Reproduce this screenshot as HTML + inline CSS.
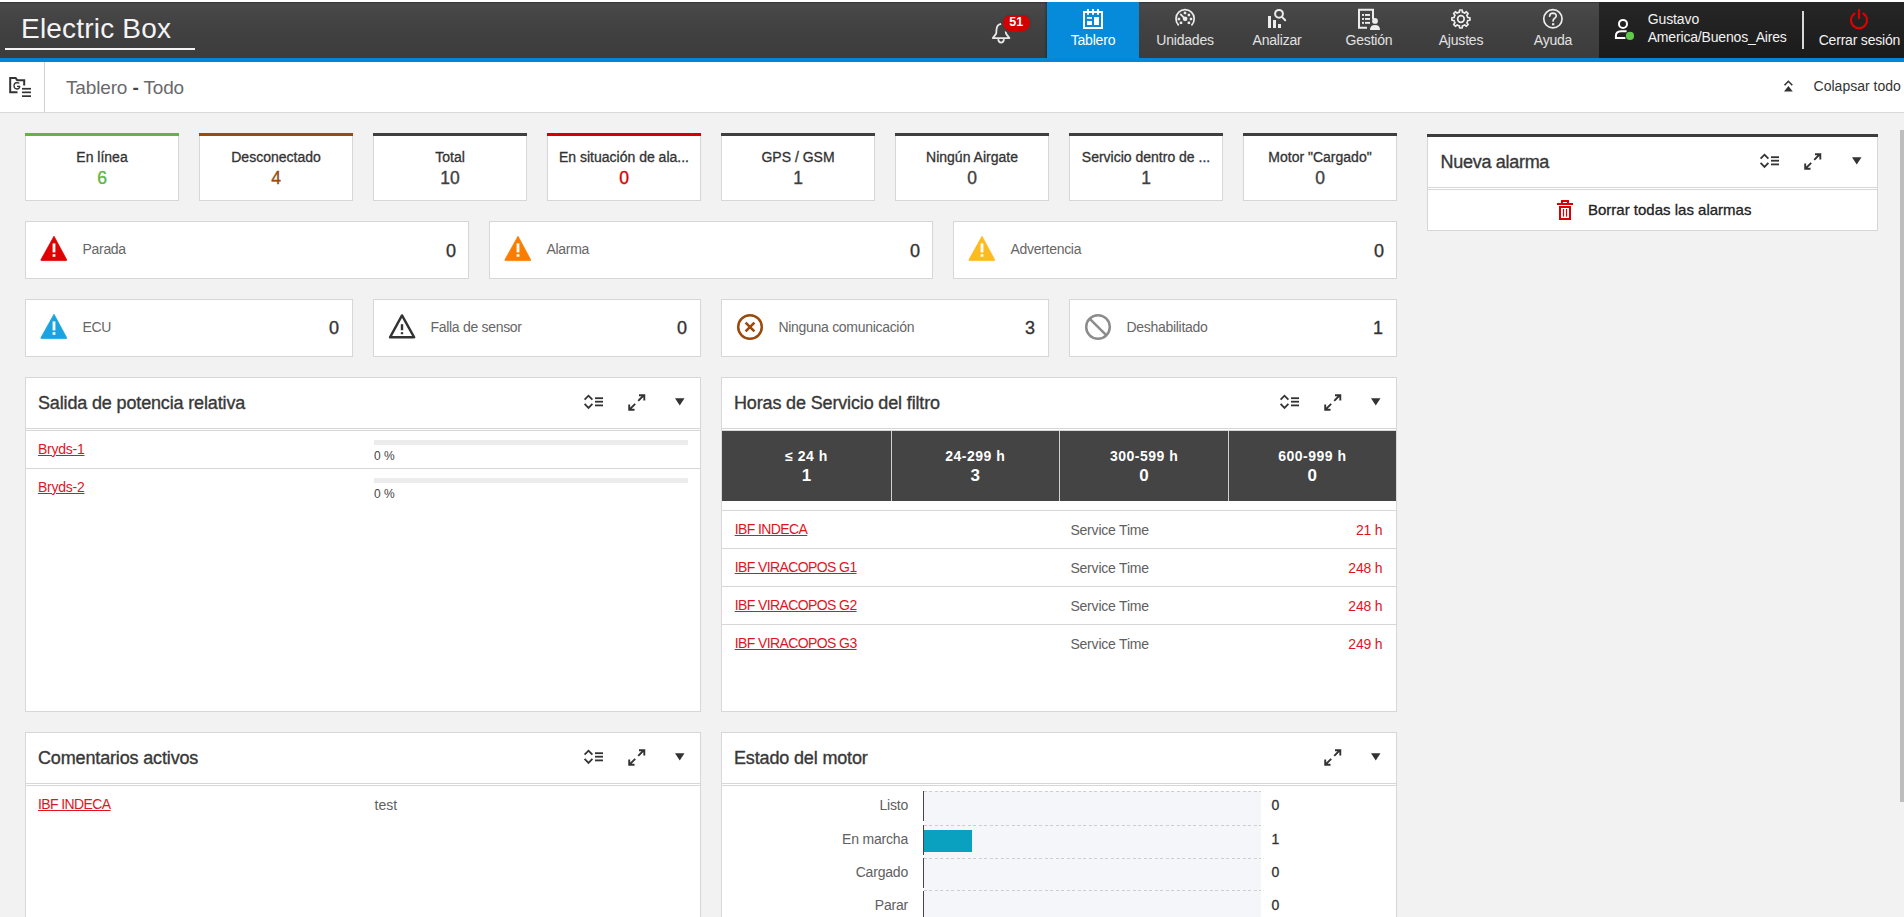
<!DOCTYPE html><html><head><meta charset="utf-8"><style>
html,body{margin:0;padding:0;}
body{width:1904px;height:917px;overflow:hidden;position:relative;background:#f2f2f2;font-family:"Liberation Sans",sans-serif;}
.t{position:absolute;white-space:nowrap;font-family:"Liberation Sans",sans-serif;}
.r{position:absolute;box-sizing:border-box;}
svg.r{overflow:visible;}
a{color:inherit;}
</style></head><body>
<div class="r" style="left:0px;top:0px;width:1904px;height:2px;background:#ffffff;"></div>
<div class="r" style="left:0px;top:2px;width:1904px;height:56px;background:linear-gradient(#353535 0px,#4a4a4a 2px,#474747 7px,#424242 22px,#3c3c3c 56px);"></div>
<div class="r" style="left:0px;top:58px;width:1904px;height:4px;background:#0287d8;"></div>
<div class="t" style="top:15.20px;font-size:28px;line-height:28px;color:#f4f4f4;font-weight:400;left:21.00px;letter-spacing:0.2px;">Electric Box</div>
<div class="r" style="left:5px;top:47.8px;width:190px;height:2.5px;background:#f4f4f4;"></div>
<svg class="r" style="left:988px;top:18px;" width="28" height="28" viewBox="0 0 28 28"><path d="M13 5.800000000000001 Q8.799999999999955 6.5 8.5 11.5 L8.200000000000045 15.600000000000001 L4.7999999999999545 20.1 L21.399999999999977 20.1 L18 15.600000000000001 L17.600000000000023 11.5 Q17.299999999999955 6.5 13 5.800000000000001 Z" fill="none" stroke="#e8e8e8" stroke-width="1.8" stroke-linejoin="round"/><path d="M10.200000000000045 21.200000000000003 Q10.600000000000023 24.6 13.100000000000023 24.6 Q15.600000000000023 24.6 16 21.200000000000003" fill="none" stroke="#e8e8e8" stroke-width="1.8"/></svg>
<div class="r" style="left:1001.2px;top:13.6px;width:30.7px;height:19px;background:#404040;border-radius:9.5px;"></div>
<div class="r" style="left:1002.7px;top:15.1px;width:27.7px;height:16px;background:#d40000;border-radius:8px;"></div>
<div class="t" style="top:16.42px;font-size:12.5px;line-height:12.5px;color:#fff;font-weight:700;left:616.20px;width:800px;text-align:center;">51</div>
<div class="r" style="left:1044px;top:2px;width:3px;height:56px;background:linear-gradient(90deg,rgba(0,0,0,0),rgba(0,0,0,0.25));"></div>
<div class="r" style="left:1047px;top:2px;width:92px;height:56px;background:#068ada;"></div>
<div class="t" style="top:33.15px;font-size:14px;line-height:14px;color:#ffffff;font-weight:400;left:693.00px;width:800px;text-align:center;letter-spacing:-0.2px;">Tablero</div>
<div class="t" style="top:33.15px;font-size:14px;line-height:14px;color:#e2e2e2;font-weight:400;left:785.00px;width:800px;text-align:center;letter-spacing:-0.2px;">Unidades</div>
<div class="t" style="top:33.15px;font-size:14px;line-height:14px;color:#e2e2e2;font-weight:400;left:877.00px;width:800px;text-align:center;letter-spacing:-0.2px;">Analizar</div>
<div class="t" style="top:33.15px;font-size:14px;line-height:14px;color:#e2e2e2;font-weight:400;left:969.00px;width:800px;text-align:center;letter-spacing:-0.2px;">Gestión</div>
<div class="t" style="top:33.15px;font-size:14px;line-height:14px;color:#e2e2e2;font-weight:400;left:1061.00px;width:800px;text-align:center;letter-spacing:-0.2px;">Ajustes</div>
<div class="t" style="top:33.15px;font-size:14px;line-height:14px;color:#e2e2e2;font-weight:400;left:1153.00px;width:800px;text-align:center;letter-spacing:-0.2px;">Ayuda</div>
<svg class="r" style="left:1080px;top:6px;" width="26" height="26" viewBox="0 0 26 26"><rect x="4" y="6" width="18" height="16" fill="none" stroke="#fff" stroke-width="2"/><rect x="7" y="3" width="2" height="5.7" fill="#fff"/><rect x="12" y="3" width="2" height="5.7" fill="#fff"/><rect x="17" y="3" width="2" height="5.7" fill="#fff"/><rect x="7" y="11" width="5" height="1.8" fill="#fff"/><rect x="7" y="15" width="5" height="4" fill="#fff"/><rect x="14" y="11" width="5" height="8" fill="#fff"/></svg>
<svg class="r" style="left:1172px;top:6px;" width="26" height="26" viewBox="0 0 26 26"><path d="M6.31 18.85 A9.1 9.1 0 1 1 19.89 18.85" fill="none" stroke="#ececec" stroke-width="1.7" stroke-linecap="round"/><rect x="11.75" y="5.70" width="2.5" height="2.5" fill="#ececec"/><rect x="15.65" y="7.75" width="2.5" height="2.5" fill="#ececec"/><rect x="5.65" y="11.75" width="2.5" height="2.5" fill="#ececec"/><rect x="17.75" y="11.75" width="2.5" height="2.5" fill="#ececec"/><rect x="7.75" y="15.55" width="2.5" height="2.5" fill="#ececec"/><rect x="15.65" y="15.55" width="2.5" height="2.5" fill="#ececec"/><line x1="8.70" y1="8.40" x2="13.10" y2="12.80" stroke="#ececec" stroke-width="1.8" stroke-linecap="round"/><circle cx="13.10" cy="12.80" r="2.4" fill="#ececec"/></svg>
<svg class="r" style="left:1264px;top:6px;" width="26" height="26" viewBox="0 0 26 26"><rect x="4" y="10" width="3" height="12" fill="#ececec"/><rect x="9" y="14" width="3" height="8" fill="#ececec"/><rect x="14" y="18" width="3" height="4" fill="#ececec"/><circle cx="15" cy="7.800000000000001" r="3.9" fill="none" stroke="#ececec" stroke-width="2"/><line x1="18" y1="10.899999999999999" x2="21.200000000000045" y2="14.2" stroke="#ececec" stroke-width="2" stroke-linecap="round"/></svg>
<svg class="r" style="left:1354px;top:6px;" width="30" height="28" viewBox="0 0 30 28"><path d="M19 13 L19 3.8000000000000007 L5 3.8000000000000007 L5 21.8 L13 21.8" fill="none" stroke="#ececec" stroke-width="2"/><rect x="8" y="8" width="2" height="1.9" fill="#ececec"/><rect x="11" y="8" width="5" height="1.9" fill="#ececec"/><rect x="8" y="12" width="2" height="1.9" fill="#ececec"/><rect x="11" y="12" width="5" height="1.9" fill="#ececec"/><rect x="8" y="15.899999999999999" width="2" height="1.9" fill="#ececec"/><rect x="11" y="15.899999999999999" width="5" height="1.9" fill="#ececec"/><circle cx="21" cy="14.899999999999999" r="2.9" fill="#ececec"/><path d="M16 24 Q16 19 21 19 Q26 19 26 24 Z" fill="#ececec"/></svg>
<svg class="r" style="left:1448px;top:6px;" width="26" height="26" viewBox="0 0 26 26"><path d="M11.37 6.17 L11.63 3.99 L14.17 3.99 L14.43 6.17 L15.19 6.39 L15.58 6.53 L15.95 6.70 L16.65 7.09 L18.37 5.73 L20.17 7.53 L18.81 9.25 L19.20 9.95 L19.37 10.32 L19.51 10.71 L19.73 11.47 L21.91 11.73 L21.91 14.27 L19.73 14.53 L19.51 15.29 L19.37 15.68 L19.20 16.05 L18.81 16.75 L20.17 18.47 L18.37 20.27 L16.65 18.91 L15.95 19.30 L15.58 19.47 L15.19 19.61 L14.43 19.83 L14.17 22.01 L11.63 22.01 L11.37 19.83 L10.61 19.61 L10.22 19.47 L9.85 19.30 L9.15 18.91 L7.43 20.27 L5.63 18.47 L6.99 16.75 L6.60 16.05 L6.43 15.68 L6.29 15.29 L6.07 14.53 L3.89 14.27 L3.89 11.73 L6.07 11.47 L6.29 10.71 L6.43 10.32 L6.60 9.95 L6.99 9.25 L5.63 7.53 L7.43 5.73 L9.15 7.09 L9.85 6.70 L10.22 6.53 L10.61 6.39 Z" fill="none" stroke="#ececec" stroke-width="1.7" stroke-linejoin="round"/><circle cx="12.90" cy="13.00" r="3.3" fill="none" stroke="#ececec" stroke-width="1.7"/></svg>
<svg class="r" style="left:1540px;top:6px;" width="26" height="26" viewBox="0 0 26 26"><circle cx="12.90" cy="12.80" r="9.15" fill="none" stroke="#ececec" stroke-width="1.7"/><path d="M9.60 10.20 Q9.80 7.20 13.00 7.20 Q16.30 7.30 16.20 10.00 Q16.00 11.60 14.40 12.50 Q13.10 13.30 13.10 15.00" fill="none" stroke="#ececec" stroke-width="1.7" stroke-linecap="round"/><rect x="12.00" y="17.20" width="2.3" height="2.1" fill="#ececec"/></svg>
<div class="r" style="left:1599px;top:2px;width:305px;height:56px;background:linear-gradient(#262626,#1b1b1b);"></div>
<svg class="r" style="left:1608px;top:14px;" width="30" height="30" viewBox="0 0 30 30"><circle cx="15" cy="9.899999999999999" r="4" fill="none" stroke="#fff" stroke-width="2"/><path d="M18.59999999999991 17.3 L13 17.3 Q7.900000000000091 17.6 7.900000000000091 21.799999999999997 L7.900000000000091 23.9 L17.5 23.9" fill="none" stroke="#fff" stroke-width="2"/><circle cx="22" cy="21.9" r="4.8" fill="#1f1f1f"/><circle cx="22" cy="21.9" r="4.1" fill="#5ec94a"/></svg>
<div class="t" style="top:12.15px;font-size:14px;line-height:14px;color:#f2f2f2;font-weight:400;left:1647.70px;letter-spacing:-0.1px;">Gustavo</div>
<div class="t" style="top:30.15px;font-size:14px;line-height:14px;color:#f2f2f2;font-weight:400;left:1647.70px;letter-spacing:-0.17px;">America/Buenos_Aires</div>
<div class="r" style="left:1802px;top:10.5px;width:2px;height:38px;background:#d8d8d8;"></div>
<svg class="r" style="left:1846px;top:7px;" width="26" height="26" viewBox="0 0 26 26"><path d="M8.61 6.61 A8 8 0 1 0 17.39 6.61" fill="none" stroke="#e00000" stroke-width="2.1" stroke-linecap="round"/><line x1="13" y1="2.8000000000000007" x2="13" y2="11.2" stroke="#e00000" stroke-width="2.1" stroke-linecap="round"/></svg>
<div class="t" style="top:33.15px;font-size:14px;line-height:14px;color:#f2f2f2;font-weight:400;left:1459.40px;width:800px;text-align:center;letter-spacing:-0.2px;">Cerrar sesión</div>
<div class="r" style="left:0px;top:62px;width:1904px;height:50px;background:#fff;"></div>
<div class="r" style="left:0px;top:112px;width:1904px;height:1px;background:#d9d9d9;"></div>
<div class="r" style="left:44px;top:62px;width:1px;height:50px;background:#d0d0d0;"></div>
<svg class="r" style="left:6px;top:72px;" width="30" height="30" viewBox="0 0 30 30"><path d="M11.5 20.200000000000003 L4.199999999999999 20.200000000000003 L4.199999999999999 6 L9.6 6 L11.2 8.200000000000003 L18.2 8.200000000000003 L18.2 13.5" fill="none" stroke="#333" stroke-width="2" stroke-linejoin="miter"/><path d="M13.3 11.400000000000006 Q12.5 10.599999999999994 10.899999999999999 10.599999999999994 Q8 10.799999999999997 8 13.799999999999997 Q8.1 17 10.899999999999999 17 Q13.7 17 13.7 14.299999999999997 L11 14.299999999999997" fill="none" stroke="#333" stroke-width="1.3"/><rect x="16" y="15.900000000000006" width="9" height="1.7" fill="#333"/><rect x="16" y="19.5" width="9" height="1.7" fill="#333"/><rect x="16" y="23.299999999999997" width="9" height="1.7" fill="#333"/></svg>
<div class="t" style="top:77.72px;font-size:19px;line-height:19px;color:#6a6a6a;font-weight:400;left:66.00px;letter-spacing:-0.15px;">Tablero <b style="color:#444">-</b> Todo</div>
<svg class="r" style="left:1780px;top:76px;" width="18" height="20" viewBox="0 0 18 20"><path d="M4.5 9.200000000000003 L8.400000000000091 5.299999999999997 L12.299999999999955 9.200000000000003" fill="none" stroke="#333" stroke-width="1.6"/><path d="M8.400000000000091 10 L12.799999999999955 15.599999999999994 L4 15.599999999999994 Z" fill="#333"/></svg>
<div class="t" style="top:79.15px;font-size:14px;line-height:14px;color:#333;font-weight:400;left:1813.60px;">Colapsar todo</div>
<div class="r" style="left:25px;top:133px;width:154px;height:68px;background:#fff;border:1px solid #d7d7d7;border-top:none;"></div>
<div class="r" style="left:25px;top:133px;width:154px;height:3px;background:#62b446;"></div>
<div class="t" style="top:150.15px;font-size:14px;line-height:14px;color:#333;font-weight:400;left:-298.00px;width:800px;text-align:center;letter-spacing:0px;-webkit-text-stroke:0.3px #333;">En línea</div>
<div class="t" style="top:169.59px;font-size:17.5px;line-height:17.5px;color:#62b446;font-weight:400;left:-298.00px;width:800px;text-align:center;-webkit-text-stroke:0.35px #62b446;">6</div>
<div class="r" style="left:199px;top:133px;width:154px;height:68px;background:#fff;border:1px solid #d7d7d7;border-top:none;"></div>
<div class="r" style="left:199px;top:133px;width:154px;height:3px;background:#9a4a0c;"></div>
<div class="t" style="top:150.15px;font-size:14px;line-height:14px;color:#333;font-weight:400;left:-124.00px;width:800px;text-align:center;letter-spacing:0px;-webkit-text-stroke:0.3px #333;">Desconectado</div>
<div class="t" style="top:169.59px;font-size:17.5px;line-height:17.5px;color:#9a4a0c;font-weight:400;left:-124.00px;width:800px;text-align:center;-webkit-text-stroke:0.35px #9a4a0c;">4</div>
<div class="r" style="left:373px;top:133px;width:154px;height:68px;background:#fff;border:1px solid #d7d7d7;border-top:none;"></div>
<div class="r" style="left:373px;top:133px;width:154px;height:3px;background:#3f3f3f;"></div>
<div class="t" style="top:150.15px;font-size:14px;line-height:14px;color:#333;font-weight:400;left:50.00px;width:800px;text-align:center;letter-spacing:0px;-webkit-text-stroke:0.3px #333;">Total</div>
<div class="t" style="top:169.59px;font-size:17.5px;line-height:17.5px;color:#3f3f3f;font-weight:400;left:50.00px;width:800px;text-align:center;-webkit-text-stroke:0.35px #3f3f3f;">10</div>
<div class="r" style="left:547px;top:133px;width:154px;height:68px;background:#fff;border:1px solid #d7d7d7;border-top:none;"></div>
<div class="r" style="left:547px;top:133px;width:154px;height:3px;background:#d40000;"></div>
<div class="t" style="top:150.15px;font-size:14px;line-height:14px;color:#333;font-weight:400;left:224.00px;width:800px;text-align:center;letter-spacing:0px;-webkit-text-stroke:0.3px #333;">En situación de ala...</div>
<div class="t" style="top:169.59px;font-size:17.5px;line-height:17.5px;color:#d40000;font-weight:400;left:224.00px;width:800px;text-align:center;-webkit-text-stroke:0.35px #d40000;">0</div>
<div class="r" style="left:721px;top:133px;width:154px;height:68px;background:#fff;border:1px solid #d7d7d7;border-top:none;"></div>
<div class="r" style="left:721px;top:133px;width:154px;height:3px;background:#3f3f3f;"></div>
<div class="t" style="top:150.15px;font-size:14px;line-height:14px;color:#333;font-weight:400;left:398.00px;width:800px;text-align:center;letter-spacing:0px;-webkit-text-stroke:0.3px #333;">GPS / GSM</div>
<div class="t" style="top:169.59px;font-size:17.5px;line-height:17.5px;color:#3f3f3f;font-weight:400;left:398.00px;width:800px;text-align:center;-webkit-text-stroke:0.35px #3f3f3f;">1</div>
<div class="r" style="left:895px;top:133px;width:154px;height:68px;background:#fff;border:1px solid #d7d7d7;border-top:none;"></div>
<div class="r" style="left:895px;top:133px;width:154px;height:3px;background:#3f3f3f;"></div>
<div class="t" style="top:150.15px;font-size:14px;line-height:14px;color:#333;font-weight:400;left:572.00px;width:800px;text-align:center;letter-spacing:0px;-webkit-text-stroke:0.3px #333;">Ningún Airgate</div>
<div class="t" style="top:169.59px;font-size:17.5px;line-height:17.5px;color:#3f3f3f;font-weight:400;left:572.00px;width:800px;text-align:center;-webkit-text-stroke:0.35px #3f3f3f;">0</div>
<div class="r" style="left:1069px;top:133px;width:154px;height:68px;background:#fff;border:1px solid #d7d7d7;border-top:none;"></div>
<div class="r" style="left:1069px;top:133px;width:154px;height:3px;background:#3f3f3f;"></div>
<div class="t" style="top:150.15px;font-size:14px;line-height:14px;color:#333;font-weight:400;left:746.00px;width:800px;text-align:center;letter-spacing:0px;-webkit-text-stroke:0.3px #333;">Servicio dentro de ...</div>
<div class="t" style="top:169.59px;font-size:17.5px;line-height:17.5px;color:#3f3f3f;font-weight:400;left:746.00px;width:800px;text-align:center;-webkit-text-stroke:0.35px #3f3f3f;">1</div>
<div class="r" style="left:1243px;top:133px;width:154px;height:68px;background:#fff;border:1px solid #d7d7d7;border-top:none;"></div>
<div class="r" style="left:1243px;top:133px;width:154px;height:3px;background:#3f3f3f;"></div>
<div class="t" style="top:150.15px;font-size:14px;line-height:14px;color:#333;font-weight:400;left:920.00px;width:800px;text-align:center;letter-spacing:0px;-webkit-text-stroke:0.3px #333;">Motor "Cargado"</div>
<div class="t" style="top:169.59px;font-size:17.5px;line-height:17.5px;color:#3f3f3f;font-weight:400;left:920.00px;width:800px;text-align:center;-webkit-text-stroke:0.35px #3f3f3f;">0</div>
<div class="r" style="left:25px;top:221px;width:444px;height:58px;background:#fff;border:1px solid #d7d7d7;"></div>
<svg class="r" style="left:40px;top:235px" width="28" height="27" viewBox="0 0 28 27"><path d="M14 1.2 L26.6 24.6 Q27 25.6 26 25.6 L1.6 25.6 Q0.6 25.6 1 24.6 Z" fill="#e00000" stroke="#e00000" stroke-width="0.8" stroke-linejoin="round"/><rect x="12.6" y="8.4" width="2.8" height="9" fill="#fff"/><rect x="12.6" y="19.2" width="2.8" height="2.6" fill="#fff"/></svg>
<div class="t" style="top:242.15px;font-size:14px;line-height:14px;color:#666;font-weight:400;left:82.50px;letter-spacing:-0.3px;">Parada</div>
<div class="t" style="top:241.66px;font-size:18px;line-height:18px;color:#333;font-weight:400;left:-344.00px;width:800px;text-align:right;-webkit-text-stroke:0.35px #333;">0</div>
<div class="r" style="left:489px;top:221px;width:444px;height:58px;background:#fff;border:1px solid #d7d7d7;"></div>
<svg class="r" style="left:504px;top:235px" width="28" height="27" viewBox="0 0 28 27"><path d="M14 1.2 L26.6 24.6 Q27 25.6 26 25.6 L1.6 25.6 Q0.6 25.6 1 24.6 Z" fill="#fa7d00" stroke="#fa7d00" stroke-width="0.8" stroke-linejoin="round"/><rect x="12.6" y="8.4" width="2.8" height="9" fill="#fff"/><rect x="12.6" y="19.2" width="2.8" height="2.6" fill="#fff"/></svg>
<div class="t" style="top:242.15px;font-size:14px;line-height:14px;color:#666;font-weight:400;left:546.50px;letter-spacing:-0.3px;">Alarma</div>
<div class="t" style="top:241.66px;font-size:18px;line-height:18px;color:#333;font-weight:400;left:120.00px;width:800px;text-align:right;-webkit-text-stroke:0.35px #333;">0</div>
<div class="r" style="left:953px;top:221px;width:444px;height:58px;background:#fff;border:1px solid #d7d7d7;"></div>
<svg class="r" style="left:968px;top:235px" width="28" height="27" viewBox="0 0 28 27"><path d="M14 1.2 L26.6 24.6 Q27 25.6 26 25.6 L1.6 25.6 Q0.6 25.6 1 24.6 Z" fill="#fdbb1f" stroke="#fdbb1f" stroke-width="0.8" stroke-linejoin="round"/><rect x="12.6" y="8.4" width="2.8" height="9" fill="#fff"/><rect x="12.6" y="19.2" width="2.8" height="2.6" fill="#fff"/></svg>
<div class="t" style="top:242.15px;font-size:14px;line-height:14px;color:#666;font-weight:400;left:1010.50px;letter-spacing:-0.3px;">Advertencia</div>
<div class="t" style="top:241.66px;font-size:18px;line-height:18px;color:#333;font-weight:400;left:584.00px;width:800px;text-align:right;-webkit-text-stroke:0.35px #333;">0</div>
<div class="r" style="left:25px;top:299px;width:328px;height:58px;background:#fff;border:1px solid #d7d7d7;"></div>
<svg class="r" style="left:40px;top:313px" width="28" height="27" viewBox="0 0 28 27"><path d="M14 1.2 L26.6 24.6 Q27 25.6 26 25.6 L1.6 25.6 Q0.6 25.6 1 24.6 Z" fill="#1aa3e0" stroke="#1aa3e0" stroke-width="0.8" stroke-linejoin="round"/><rect x="12.6" y="8.4" width="2.8" height="9" fill="#fff"/><rect x="12.6" y="19.2" width="2.8" height="2.6" fill="#fff"/></svg>
<div class="t" style="top:320.45px;font-size:14px;line-height:14px;color:#666;font-weight:400;left:82.50px;letter-spacing:-0.3px;">ECU</div>
<div class="t" style="top:319.26px;font-size:18px;line-height:18px;color:#333;font-weight:400;left:-461.00px;width:800px;text-align:right;-webkit-text-stroke:0.35px #333;">0</div>
<div class="r" style="left:373px;top:299px;width:328px;height:58px;background:#fff;border:1px solid #d7d7d7;"></div>
<svg class="r" style="left:389px;top:313px" width="28" height="27" viewBox="0 0 28 27"><path d="M13 2.4 L25.2 24.3 L1 24.3 Z" fill="none" stroke="#333" stroke-width="2.4" stroke-linejoin="round"/><rect x="11.8" y="11.2" width="2.4" height="6" fill="#333"/><rect x="11.8" y="19.2" width="2.4" height="2" fill="#333"/></svg>
<div class="t" style="top:320.45px;font-size:14px;line-height:14px;color:#666;font-weight:400;left:430.50px;letter-spacing:-0.3px;">Falla de sensor</div>
<div class="t" style="top:319.26px;font-size:18px;line-height:18px;color:#333;font-weight:400;left:-113.00px;width:800px;text-align:right;-webkit-text-stroke:0.35px #333;">0</div>
<div class="r" style="left:721px;top:299px;width:328px;height:58px;background:#fff;border:1px solid #d7d7d7;"></div>
<svg class="r" style="left:735.8px;top:312.8px" width="28" height="28" viewBox="0 0 28 28"><circle cx="14" cy="14" r="11.8" fill="none" stroke="#9a4a0c" stroke-width="2.5"/><path d="M9.6 9.6 L18.4 18.4 M18.4 9.6 L9.6 18.4" stroke="#9a4a0c" stroke-width="2.6"/></svg>
<div class="t" style="top:320.45px;font-size:14px;line-height:14px;color:#666;font-weight:400;left:778.50px;letter-spacing:-0.3px;">Ninguna comunicación</div>
<div class="t" style="top:319.26px;font-size:18px;line-height:18px;color:#333;font-weight:400;left:235.00px;width:800px;text-align:right;-webkit-text-stroke:0.35px #333;">3</div>
<div class="r" style="left:1069px;top:299px;width:328px;height:58px;background:#fff;border:1px solid #d7d7d7;"></div>
<svg class="r" style="left:1083.8px;top:312.8px" width="28" height="28" viewBox="0 0 28 28"><circle cx="14" cy="14" r="11.8" fill="none" stroke="#8c8c8c" stroke-width="2.5"/><path d="M5.8 5.8 L22.2 22.2" stroke="#8c8c8c" stroke-width="2.5"/></svg>
<div class="t" style="top:320.45px;font-size:14px;line-height:14px;color:#666;font-weight:400;left:1126.50px;letter-spacing:-0.3px;">Deshabilitado</div>
<div class="t" style="top:319.26px;font-size:18px;line-height:18px;color:#333;font-weight:400;left:583.00px;width:800px;text-align:right;-webkit-text-stroke:0.35px #333;">1</div>
<div class="r" style="left:25px;top:377px;width:676px;height:335px;background:#fff;border:1px solid #d7d7d7;"></div>
<div class="r" style="left:25px;top:428px;width:676px;height:1px;background:#d7d7d7;"></div>
<div class="r" style="left:25px;top:430px;width:676px;height:1px;background:#d7d7d7;"></div>
<div class="t" style="top:393.76px;font-size:18px;line-height:18px;color:#383838;font-weight:400;left:38.00px;letter-spacing:-0.15px;-webkit-text-stroke:0.35px #383838;">Salida de potencia relativa</div>
<svg class="r" style="left:583px;top:394px" width="22" height="17" viewBox="0 0 22 17"><path d="M1.6 5.7 L5.5 1.7 L9.4 5.7 M1.6 9.9 L5.5 13.9 L9.4 9.9" fill="none" stroke="#333" stroke-width="1.8"/><rect x="12" y="3.3" width="8" height="1.8" fill="#333"/><rect x="12" y="6.8" width="8" height="1.8" fill="#333"/><rect x="12" y="10.5" width="8" height="1.8" fill="#333"/></svg>
<svg class="r" style="left:628px;top:393.8px" width="18" height="17" viewBox="0 0 18 17"><path d="M10.2 6.8 L16 1 M11 1.2 L16.3 1.2 L16.3 6.4" fill="none" stroke="#333" stroke-width="1.9"/><path d="M7.2 9.8 L1.4 15.6 M1.2 10.4 L1.2 15.8 L6.5 15.8" fill="none" stroke="#333" stroke-width="1.9"/></svg>
<svg class="r" style="left:675px;top:398px" width="10" height="8" viewBox="0 0 10 8"><path d="M0 0.2 L9.5 0.2 L4.75 7.6 Z" fill="#333"/></svg>
<div class="r" style="left:26px;top:468px;width:674px;height:1px;background:#d7d7d7;"></div>
<div class="t" style="top:441.85px;font-size:14px;line-height:14px;color:#e0141e;font-weight:400;left:38.00px;text-decoration:underline;text-underline-offset:0.6px;letter-spacing:-0.25px;">Bryds-1</div>
<div class="r" style="left:374px;top:440px;width:314px;height:5px;background:#ececec;"></div>
<div class="t" style="top:450.04px;font-size:12px;line-height:12px;color:#444;font-weight:400;left:374.00px;">0 %</div>
<div class="t" style="top:479.85px;font-size:14px;line-height:14px;color:#e0141e;font-weight:400;left:38.00px;text-decoration:underline;text-underline-offset:0.6px;letter-spacing:-0.25px;">Bryds-2</div>
<div class="r" style="left:374px;top:478px;width:314px;height:5px;background:#ececec;"></div>
<div class="t" style="top:488.04px;font-size:12px;line-height:12px;color:#444;font-weight:400;left:374.00px;">0 %</div>
<div class="r" style="left:721px;top:377px;width:676px;height:335px;background:#fff;border:1px solid #d7d7d7;"></div>
<div class="r" style="left:721px;top:428px;width:676px;height:1px;background:#d7d7d7;"></div>
<div class="r" style="left:721px;top:430px;width:676px;height:1px;background:#d7d7d7;"></div>
<div class="t" style="top:393.76px;font-size:18px;line-height:18px;color:#383838;font-weight:400;left:734.00px;letter-spacing:-0.15px;-webkit-text-stroke:0.35px #383838;">Horas de Servicio del filtro</div>
<svg class="r" style="left:1279px;top:394px" width="22" height="17" viewBox="0 0 22 17"><path d="M1.6 5.7 L5.5 1.7 L9.4 5.7 M1.6 9.9 L5.5 13.9 L9.4 9.9" fill="none" stroke="#333" stroke-width="1.8"/><rect x="12" y="3.3" width="8" height="1.8" fill="#333"/><rect x="12" y="6.8" width="8" height="1.8" fill="#333"/><rect x="12" y="10.5" width="8" height="1.8" fill="#333"/></svg>
<svg class="r" style="left:1324px;top:393.8px" width="18" height="17" viewBox="0 0 18 17"><path d="M10.2 6.8 L16 1 M11 1.2 L16.3 1.2 L16.3 6.4" fill="none" stroke="#333" stroke-width="1.9"/><path d="M7.2 9.8 L1.4 15.6 M1.2 10.4 L1.2 15.8 L6.5 15.8" fill="none" stroke="#333" stroke-width="1.9"/></svg>
<svg class="r" style="left:1371px;top:398px" width="10" height="8" viewBox="0 0 10 8"><path d="M0 0.2 L9.5 0.2 L4.75 7.6 Z" fill="#333"/></svg>
<div class="r" style="left:722px;top:431px;width:674px;height:69.5px;background:#444;"></div>
<div class="t" style="top:449.15px;font-size:14px;line-height:14px;color:#fff;font-weight:700;left:406.50px;width:800px;text-align:center;letter-spacing:0.5px;">≤ 24 h</div>
<div class="t" style="top:467.21px;font-size:17px;line-height:17px;color:#fff;font-weight:700;left:406.50px;width:800px;text-align:center;">1</div>
<div class="r" style="left:890.5px;top:431px;width:1px;height:69.5px;background:#d0d0d0;"></div>
<div class="t" style="top:449.15px;font-size:14px;line-height:14px;color:#fff;font-weight:700;left:575.25px;width:800px;text-align:center;letter-spacing:0.5px;">24-299 h</div>
<div class="t" style="top:467.21px;font-size:17px;line-height:17px;color:#fff;font-weight:700;left:575.25px;width:800px;text-align:center;">3</div>
<div class="r" style="left:1059.0px;top:431px;width:1px;height:69.5px;background:#d0d0d0;"></div>
<div class="t" style="top:449.15px;font-size:14px;line-height:14px;color:#fff;font-weight:700;left:744.10px;width:800px;text-align:center;letter-spacing:0.5px;">300-599 h</div>
<div class="t" style="top:467.21px;font-size:17px;line-height:17px;color:#fff;font-weight:700;left:744.10px;width:800px;text-align:center;">0</div>
<div class="r" style="left:1228.2px;top:431px;width:1px;height:69.5px;background:#d0d0d0;"></div>
<div class="t" style="top:449.15px;font-size:14px;line-height:14px;color:#fff;font-weight:700;left:912.35px;width:800px;text-align:center;letter-spacing:0.5px;">600-999 h</div>
<div class="t" style="top:467.21px;font-size:17px;line-height:17px;color:#fff;font-weight:700;left:912.35px;width:800px;text-align:center;">0</div>
<div class="r" style="left:722px;top:510px;width:674px;height:1px;background:#d7d7d7;"></div>
<div class="r" style="left:722px;top:548px;width:674px;height:1px;background:#d7d7d7;"></div>
<div class="r" style="left:722px;top:586px;width:674px;height:1px;background:#d7d7d7;"></div>
<div class="r" style="left:722px;top:624px;width:674px;height:1px;background:#d7d7d7;"></div>
<div class="t" style="top:522.05px;font-size:14px;line-height:14px;color:#e0141e;font-weight:400;left:734.70px;text-decoration:underline;text-underline-offset:0.6px;letter-spacing:-0.6px;">IBF INDECA</div>
<div class="t" style="top:522.95px;font-size:14px;line-height:14px;color:#606060;font-weight:400;left:1070.40px;letter-spacing:-0.2px;">Service Time</div>
<div class="t" style="top:522.95px;font-size:14px;line-height:14px;color:#e0141e;font-weight:400;left:582.40px;width:800px;text-align:right;letter-spacing:-0.2px;">21 h</div>
<div class="t" style="top:559.95px;font-size:14px;line-height:14px;color:#e0141e;font-weight:400;left:734.70px;text-decoration:underline;text-underline-offset:0.6px;letter-spacing:-0.6px;">IBF VIRACOPOS G1</div>
<div class="t" style="top:560.85px;font-size:14px;line-height:14px;color:#606060;font-weight:400;left:1070.40px;letter-spacing:-0.2px;">Service Time</div>
<div class="t" style="top:560.85px;font-size:14px;line-height:14px;color:#e0141e;font-weight:400;left:582.40px;width:800px;text-align:right;letter-spacing:-0.2px;">248 h</div>
<div class="t" style="top:597.85px;font-size:14px;line-height:14px;color:#e0141e;font-weight:400;left:734.70px;text-decoration:underline;text-underline-offset:0.6px;letter-spacing:-0.6px;">IBF VIRACOPOS G2</div>
<div class="t" style="top:598.75px;font-size:14px;line-height:14px;color:#606060;font-weight:400;left:1070.40px;letter-spacing:-0.2px;">Service Time</div>
<div class="t" style="top:598.75px;font-size:14px;line-height:14px;color:#e0141e;font-weight:400;left:582.40px;width:800px;text-align:right;letter-spacing:-0.2px;">248 h</div>
<div class="t" style="top:635.75px;font-size:14px;line-height:14px;color:#e0141e;font-weight:400;left:734.70px;text-decoration:underline;text-underline-offset:0.6px;letter-spacing:-0.6px;">IBF VIRACOPOS G3</div>
<div class="t" style="top:636.65px;font-size:14px;line-height:14px;color:#606060;font-weight:400;left:1070.40px;letter-spacing:-0.2px;">Service Time</div>
<div class="t" style="top:636.65px;font-size:14px;line-height:14px;color:#e0141e;font-weight:400;left:582.40px;width:800px;text-align:right;letter-spacing:-0.2px;">249 h</div>
<div class="r" style="left:25px;top:732px;width:676px;height:200px;background:#fff;border:1px solid #d7d7d7;"></div>
<div class="r" style="left:25px;top:783px;width:676px;height:1px;background:#d7d7d7;"></div>
<div class="r" style="left:25px;top:785px;width:676px;height:1px;background:#d7d7d7;"></div>
<div class="t" style="top:748.76px;font-size:18px;line-height:18px;color:#383838;font-weight:400;left:38.00px;letter-spacing:-0.15px;-webkit-text-stroke:0.35px #383838;">Comentarios activos</div>
<svg class="r" style="left:583px;top:749px" width="22" height="17" viewBox="0 0 22 17"><path d="M1.6 5.7 L5.5 1.7 L9.4 5.7 M1.6 9.9 L5.5 13.9 L9.4 9.9" fill="none" stroke="#333" stroke-width="1.8"/><rect x="12" y="3.3" width="8" height="1.8" fill="#333"/><rect x="12" y="6.8" width="8" height="1.8" fill="#333"/><rect x="12" y="10.5" width="8" height="1.8" fill="#333"/></svg>
<svg class="r" style="left:628px;top:748.8px" width="18" height="17" viewBox="0 0 18 17"><path d="M10.2 6.8 L16 1 M11 1.2 L16.3 1.2 L16.3 6.4" fill="none" stroke="#333" stroke-width="1.9"/><path d="M7.2 9.8 L1.4 15.6 M1.2 10.4 L1.2 15.8 L6.5 15.8" fill="none" stroke="#333" stroke-width="1.9"/></svg>
<svg class="r" style="left:675px;top:753px" width="10" height="8" viewBox="0 0 10 8"><path d="M0 0.2 L9.5 0.2 L4.75 7.6 Z" fill="#333"/></svg>
<div class="t" style="top:796.85px;font-size:14px;line-height:14px;color:#e0141e;font-weight:400;left:38.00px;text-decoration:underline;text-underline-offset:0.6px;letter-spacing:-0.6px;">IBF INDECA</div>
<div class="t" style="top:798.15px;font-size:14px;line-height:14px;color:#606060;font-weight:400;left:374.60px;">test</div>
<div class="r" style="left:721px;top:732px;width:676px;height:200px;background:#fff;border:1px solid #d7d7d7;"></div>
<div class="r" style="left:721px;top:783px;width:676px;height:1px;background:#d7d7d7;"></div>
<div class="r" style="left:721px;top:785px;width:676px;height:1px;background:#d7d7d7;"></div>
<div class="t" style="top:748.76px;font-size:18px;line-height:18px;color:#383838;font-weight:400;left:734.00px;letter-spacing:-0.15px;-webkit-text-stroke:0.35px #383838;">Estado del motor</div>
<svg class="r" style="left:1324px;top:748.8px" width="18" height="17" viewBox="0 0 18 17"><path d="M10.2 6.8 L16 1 M11 1.2 L16.3 1.2 L16.3 6.4" fill="none" stroke="#333" stroke-width="1.9"/><path d="M7.2 9.8 L1.4 15.6 M1.2 10.4 L1.2 15.8 L6.5 15.8" fill="none" stroke="#333" stroke-width="1.9"/></svg>
<svg class="r" style="left:1371px;top:753px" width="10" height="8" viewBox="0 0 10 8"><path d="M0 0.2 L9.5 0.2 L4.75 7.6 Z" fill="#333"/></svg>
<div class="r" style="left:924px;top:790.5px;width:337px;height:130px;background:#f4f6fa;"></div>
<div class="r" style="left:924px;top:790.9px;width:337px;height:1px;background:repeating-linear-gradient(90deg,#cdcdcd 0 3px,transparent 3px 5.5px);"></div>
<div class="r" style="left:924px;top:824.6px;width:337px;height:1px;background:repeating-linear-gradient(90deg,#cdcdcd 0 3px,transparent 3px 5.5px);"></div>
<div class="r" style="left:924px;top:857.5px;width:337px;height:1px;background:repeating-linear-gradient(90deg,#cdcdcd 0 3px,transparent 3px 5.5px);"></div>
<div class="r" style="left:924px;top:890.4px;width:337px;height:1px;background:repeating-linear-gradient(90deg,#cdcdcd 0 3px,transparent 3px 5.5px);"></div>
<div class="r" style="left:923px;top:791.4px;width:1.2px;height:30px;background:#444;"></div>
<div class="r" style="left:923px;top:824.6px;width:1.2px;height:30px;background:#444;"></div>
<div class="r" style="left:923px;top:857.8px;width:1.2px;height:30px;background:#444;"></div>
<div class="r" style="left:923px;top:891.0px;width:1.2px;height:30px;background:#444;"></div>
<div class="r" style="left:924px;top:830px;width:48px;height:21.7px;background:#0aa0bf;"></div>
<div class="t" style="top:798.35px;font-size:14px;line-height:14px;color:#606060;font-weight:400;left:108.00px;width:800px;text-align:right;letter-spacing:-0.2px;">Listo</div>
<div class="t" style="top:798.35px;font-size:14px;line-height:14px;color:#333;font-weight:400;left:1271.60px;-webkit-text-stroke:0.3px #333;">0</div>
<div class="t" style="top:831.65px;font-size:14px;line-height:14px;color:#606060;font-weight:400;left:108.00px;width:800px;text-align:right;letter-spacing:-0.2px;">En marcha</div>
<div class="t" style="top:831.65px;font-size:14px;line-height:14px;color:#333;font-weight:400;left:1271.60px;-webkit-text-stroke:0.3px #333;">1</div>
<div class="t" style="top:864.95px;font-size:14px;line-height:14px;color:#606060;font-weight:400;left:108.00px;width:800px;text-align:right;letter-spacing:-0.2px;">Cargado</div>
<div class="t" style="top:864.95px;font-size:14px;line-height:14px;color:#333;font-weight:400;left:1271.60px;-webkit-text-stroke:0.3px #333;">0</div>
<div class="t" style="top:898.25px;font-size:14px;line-height:14px;color:#606060;font-weight:400;left:108.00px;width:800px;text-align:right;letter-spacing:-0.2px;">Parar</div>
<div class="t" style="top:898.25px;font-size:14px;line-height:14px;color:#333;font-weight:400;left:1271.60px;-webkit-text-stroke:0.3px #333;">0</div>
<div class="r" style="left:1427px;top:134px;width:451px;height:97px;background:#fff;border:1px solid #d7d7d7;"></div>
<div class="r" style="left:1427px;top:134px;width:451px;height:3px;background:#3d3d3d;"></div>
<div class="r" style="left:1427px;top:187px;width:451px;height:1px;background:#d7d7d7;"></div>
<div class="r" style="left:1427px;top:189px;width:451px;height:1px;background:#d7d7d7;"></div>
<div class="t" style="top:152.76px;font-size:18px;line-height:18px;color:#383838;font-weight:400;left:1440.60px;letter-spacing:-0.3px;-webkit-text-stroke:0.35px #383838;">Nueva alarma</div>
<svg class="r" style="left:1759px;top:153px" width="22" height="17" viewBox="0 0 22 17"><path d="M1.6 5.7 L5.5 1.7 L9.4 5.7 M1.6 9.9 L5.5 13.9 L9.4 9.9" fill="none" stroke="#333" stroke-width="1.8"/><rect x="12" y="3.3" width="8" height="1.8" fill="#333"/><rect x="12" y="6.8" width="8" height="1.8" fill="#333"/><rect x="12" y="10.5" width="8" height="1.8" fill="#333"/></svg>
<svg class="r" style="left:1804px;top:152.8px" width="18" height="17" viewBox="0 0 18 17"><path d="M10.2 6.8 L16 1 M11 1.2 L16.3 1.2 L16.3 6.4" fill="none" stroke="#333" stroke-width="1.9"/><path d="M7.2 9.8 L1.4 15.6 M1.2 10.4 L1.2 15.8 L6.5 15.8" fill="none" stroke="#333" stroke-width="1.9"/></svg>
<svg class="r" style="left:1852px;top:157px" width="10" height="8" viewBox="0 0 10 8"><path d="M0 0.2 L9.5 0.2 L4.75 7.6 Z" fill="#333"/></svg>
<svg class="r" style="left:1555px;top:198px;" width="20" height="24" viewBox="0 0 20 24"><rect x="2" y="5" width="16" height="2" fill="#dd0000"/><path d="M7 5.5 L7 3 L13 3 L13 5.5" fill="none" stroke="#dd0000" stroke-width="2"/><rect x="5" y="9" width="10" height="12" fill="none" stroke="#dd0000" stroke-width="2"/><rect x="7.900000000000091" y="11" width="1.2" height="7.6" fill="#dd0000"/><rect x="10.900000000000091" y="11" width="1.2" height="7.6" fill="#dd0000"/></svg>
<div class="t" style="top:202.10px;font-size:15px;line-height:15px;color:#222;font-weight:400;left:1588.00px;-webkit-text-stroke:0.3px #222;">Borrar todas las alarmas</div>
<div class="r" style="left:1900px;top:130px;width:4px;height:672px;background:#bdbdbd;"></div>
</body></html>
